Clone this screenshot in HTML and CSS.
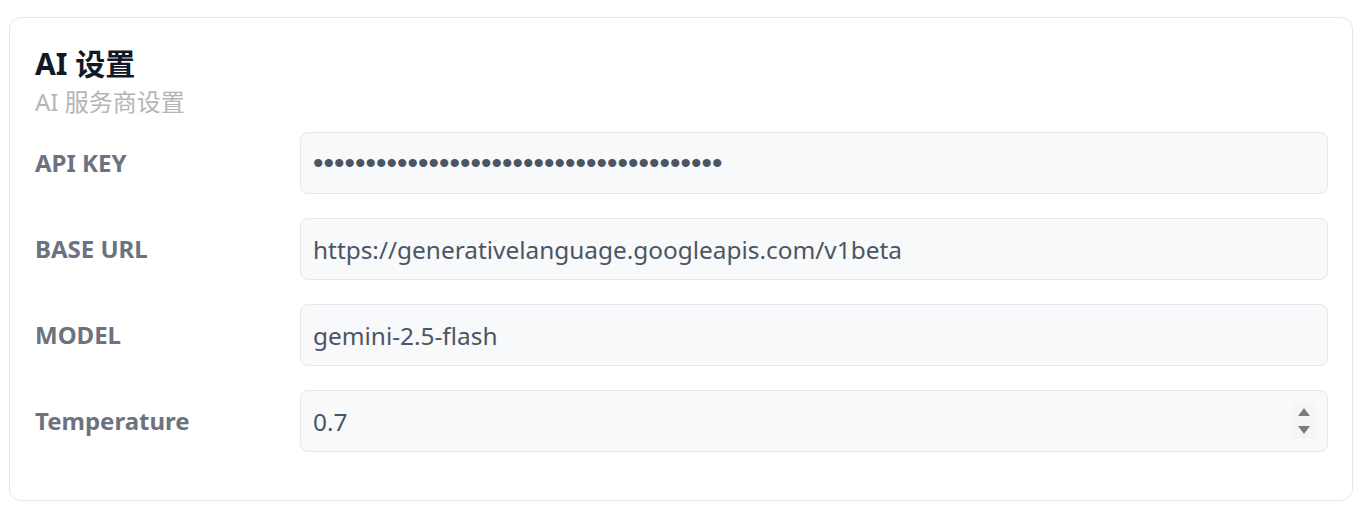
FILE: index.html
```html
<!DOCTYPE html>
<html lang="zh-CN">
<head>
<meta charset="utf-8">
<title>AI 设置</title>
<link rel="stylesheet" href="styles.css">
</head>
<body>
<section class="card">
  <header class="card-head">
    <h2 class="title">AI 设置</h2>
    <p class="subtitle">AI 服务商设置</p>
  </header>
  <form class="form">
    <div class="row">
      <label class="label" for="key">API KEY</label>
      <input class="field field-secret" id="key" type="password" value="sk-abcdefghijklmnopqrstuvwxyz0123456789">
    </div>
    <div class="row">
      <label class="label" for="url">BASE URL</label>
      <input class="field" id="url" type="text" value="https://generativelanguage.googleapis.com/v1beta">
    </div>
    <div class="row">
      <label class="label" for="model">MODEL</label>
      <input class="field" id="model" type="text" value="gemini-2.5-flash">
    </div>
    <div class="row">
      <label class="label" for="temp">Temperature</label>
      <div class="num-wrap">
        <input class="field" id="temp" type="number" step="0.1" value="0.7">
        <span class="spin" aria-hidden="true">
          <svg width="14" height="30" viewBox="0 0 14 30">
            <path d="M7 2 L13 10 L1 10 Z" fill="#7b7b7b"/>
            <path d="M1 20 L13 20 L7 28 Z" fill="#7b7b7b"/>
          </svg>
        </span>
      </div>
    </div>
  </form>
</section>
</body>
</html>
```
FILE: styles.css
```css
* { box-sizing: border-box; }
html, body { background: #ffffff; }
body {
  margin: 0;
  padding: 17px 12px 15px 9px;
  font-family: "Noto Sans", "Noto Sans CJK SC", sans-serif;
}
.card {
  border: 1px solid #e5e7eb;
  border-radius: 12px;
  padding: 25px 24px 48px 25px;
  background: #fff;
}
.card-head { margin-bottom: 14px; }
.title {
  margin: 0;
  font-size: 30px;
  line-height: 44px;
  font-weight: 700;
  color: #111827;
  margin-top: -1px;
}
.subtitle {
  margin: 0;
  font-size: 24px;
  line-height: 32px;
  color: #b5b5b5;
}
.form {
  display: flex;
  flex-direction: column;
  gap: 24px;
}
.row {
  display: grid;
  grid-template-columns: 265px 1fr;
  align-items: center;
}
.label {
  font-size: 24px;
  font-weight: 700;
  color: #6b7280;
  margin-top: -2px;
}
.field {
  width: 100%;
  height: 62px;
  border: 1px solid #e5e7eb;
  border-radius: 8px;
  background: #f8f9fa;
  padding: 0 12px;
  font-family: "Noto Sans", sans-serif;
  font-size: 24.4px;
  color: #4b5563;
  outline: none;
}
.field-secret {
  font-family: "Liberation Sans", sans-serif;
  font-size: 30px;
  letter-spacing: 0;
}
.num-wrap { position: relative; }
.field[type="number"] { -moz-appearance: textfield; appearance: textfield; }
.field::-webkit-inner-spin-button,
.field::-webkit-outer-spin-button { -webkit-appearance: none; margin: 0; }
.spin {
  position: absolute;
  right: 13px;
  top: 13px;
  width: 22px;
  height: 36px;
  background: #f4f5f6;
  display: flex;
  align-items: center;
  justify-content: center;
}
```
